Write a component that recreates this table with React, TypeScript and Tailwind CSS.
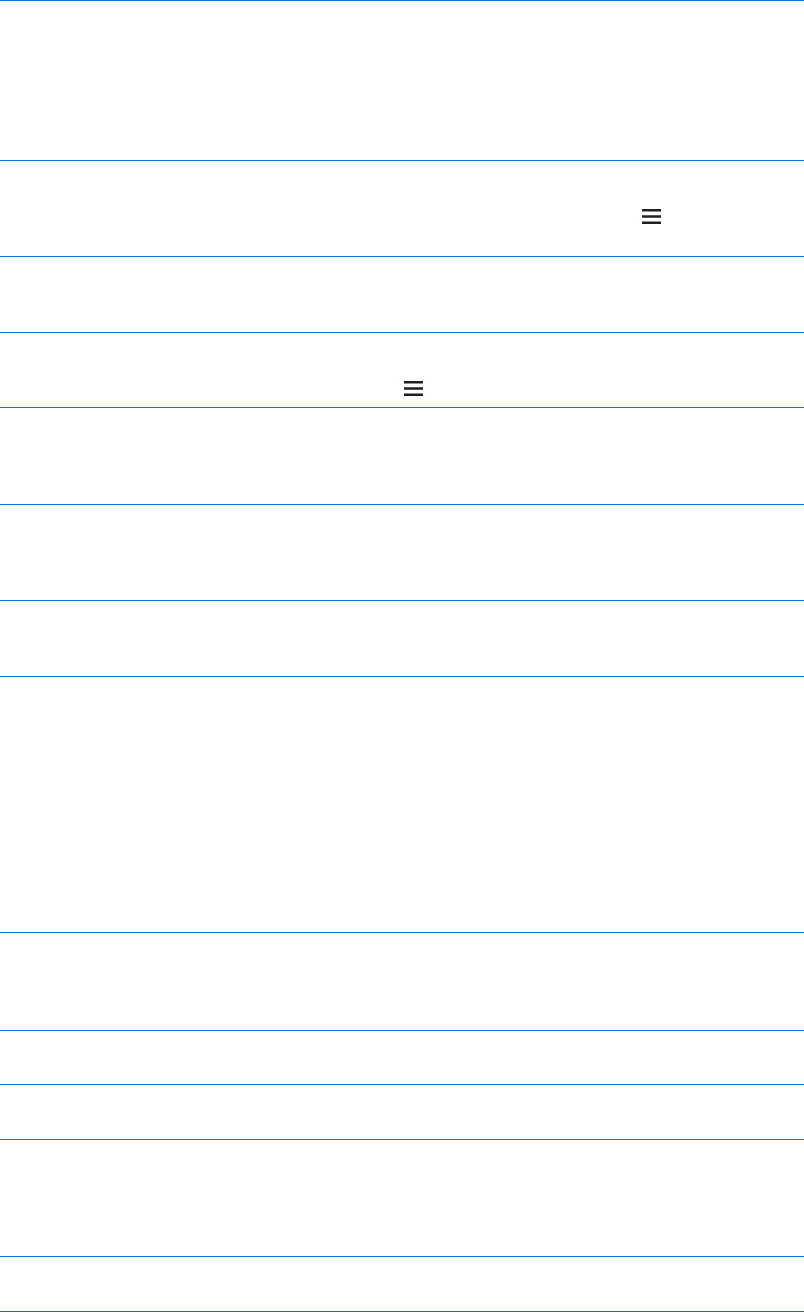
import React from "react";

const ROWS: { h: number; icon?: { left: number; top: number } }[] = [
  { h: 160 },
  { h: 96, icon: { left: 642, top: 49 } },
  { h: 76 },
  { h: 75, icon: { left: 404, top: 49 } },
  { h: 97 },
  { h: 96 },
  { h: 76 },
  { h: 256 },
  { h: 98 },
  { h: 54 },
  { h: 55 },
  { h: 117 },
  { h: 55 },
];

function MenuGlyph() {
  return (
    <svg width="19" height="15" viewBox="0 0 19 15" className="block">
      <rect x="0" y="0" width="19" height="2.5" fill="#231f20" />
      <rect x="0" y="6.25" width="19" height="2.5" fill="#231f20" />
      <rect x="0" y="12.5" width="19" height="2.5" fill="#231f20" />
    </svg>
  );
}

export default function App() {
  return (
    <div className="w-[804px] h-[1312px] bg-white overflow-hidden">
      {ROWS.map((row, i) => (
        <div key={i} className="relative border-t border-[#0e7ad2]" style={{ height: row.h }}>
          {row.icon && (
            <div className="absolute" style={{ left: row.icon.left, top: row.icon.top - 1 }}>
              <MenuGlyph />
            </div>
          )}
        </div>
      ))}
      <div className="border-t border-[#2a6ba3]" />
    </div>
  );
}
